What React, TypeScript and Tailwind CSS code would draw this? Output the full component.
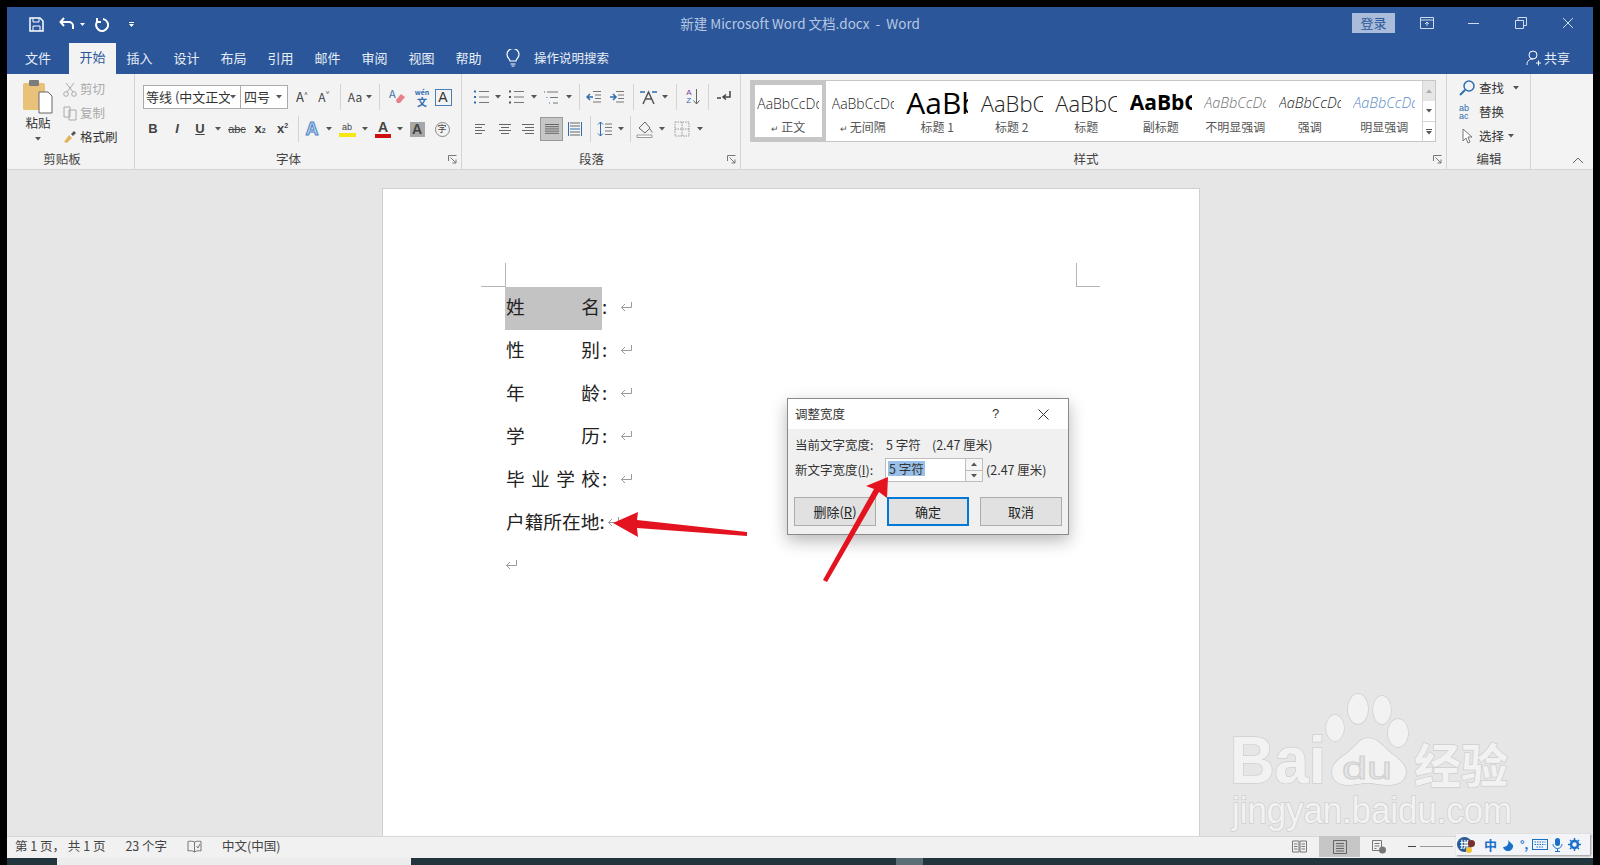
import { ReactNode } from "react";

const cjk = "font-['Noto_Sans_CJK_SC','Noto_Sans',sans-serif]";

const Caret = ({ className = "" }: { className?: string }) => (
  <svg width="6" height="4" viewBox="0 0 6 4" className={className}>
    <path d="M0 0h6L3 3.5z" fill="#555" />
  </svg>
);

const VDiv = ({ className = "" }: { className?: string }) => (
  <div className={`w-px h-[26px] bg-[#d4d4d4] shrink-0 ${className}`} />
);

const Launcher = () => (
  <svg width="9" height="9" viewBox="0 0 9 9" className="shrink-0">
    <path d="M.5 6V.5H8.5M2.5 2.5l5.5 5.5M8 4.5V8H4.5" fill="none" stroke="#777" />
  </svg>
);

const Cell = ({ className = "", children }: { className?: string; children?: ReactNode }) => (
  <div className={`flex items-center justify-center shrink-0 h-[24px] ${className}`}>{children}</div>
);

const GroupLabel = ({ text, className = "" }: { text: string; className?: string }) => (
  <div className={`flex items-center h-[20px] text-[12.5px] text-[#444] ${className}`}>
    <span className="flex-1 text-center">{text}</span>
  </div>
);

// paragraph alignment glyphs
const AlignIcon = ({ kind }: { kind: "left" | "center" | "right" | "justify" }) => {
  const rows: [number, number][] =
    kind === "left"
      ? [[1, 11], [1, 8], [1, 11], [1, 8]]
      : kind === "center"
      ? [[1, 13], [3, 11], [1, 13], [3, 11]]
      : kind === "right"
      ? [[1, 13], [4, 13], [1, 13], [4, 13]]
      : [[1, 15], [1, 15], [1, 15], [1, 15], [1, 15]];
  return (
    <svg width="16" height="14" viewBox="0 0 16 14">
      {rows.map(([a, b], i) => (
        <path key={i} d={`M${a} ${2.5 + i * (kind === "justify" ? 2.2 : 3)}H${b}`} stroke="#666" strokeWidth="1" />
      ))}
    </svg>
  );
};

const ReturnMark = ({ className = "" }: { className?: string }) => (
  <svg width="13" height="11" viewBox="0 0 13 11" className={className}>
    <path d="M11.5 1v5.5H1.5M5 3L1.5 6.5 5 10" fill="none" stroke="#9a9a9a" strokeWidth="1" />
  </svg>
);

const Clipboard = () => (
  <div className="w-[127px] shrink-0 flex flex-col">
    <div className="h-[75px] flex pl-[12px] pt-[6px]">
      <div className="w-[38px] flex flex-col items-center">
        <svg width="30" height="34" viewBox="0 0 30 34">
          <rect x="0" y="3" width="22" height="27" rx="1.5" fill="#e9c27a" />
          <rect x="6" y="0" width="10" height="6" rx="1" fill="#7c7c7c" />
          <path d="M16 12h9l4 4v17H16z" fill="#fff" stroke="#666" />
        </svg>
        <span className="text-[12.5px] text-[#333] leading-[16px] mt-[1px]">粘贴</span>
        <Caret className="mt-[6px]" />
      </div>
      <div className="flex flex-col ml-[6px] -mt-[2px] gap-[2px] text-[12.5px]">
        <div className="flex items-center h-[23px] gap-[3px] text-[#aaa]">
          <svg width="14" height="15" viewBox="0 0 14 15">
            <path d="M3 1l7 9M11 1l-7 9" stroke="#aaa" fill="none" />
            <circle cx="3" cy="12" r="2.3" stroke="#aaa" fill="none" />
            <circle cx="11" cy="12" r="2.3" stroke="#aaa" fill="none" />
          </svg>
          剪切
        </div>
        <div className="flex items-center h-[23px] gap-[3px] text-[#aaa]">
          <svg width="14" height="15" viewBox="0 0 14 15">
            <path d="M1 1h6v10H1zM6 4h7v10H6z" stroke="#aaa" fill="#f3f3f3" />
          </svg>
          复制
        </div>
        <div className="flex items-center h-[23px] gap-[3px] text-[#333]">
          <svg width="14" height="15" viewBox="0 0 14 15">
            <path d="M6 5l3 3-5 5-3-1z" fill="#e2b45c" />
            <path d="M8 4l3-3 2 2-3 3z" fill="#555" />
          </svg>
          格式刷
        </div>
      </div>
    </div>
    <GroupLabel text="剪贴板" className="pr-[17px]" />
  </div>
);

const FontGroup = () => (
  <div className="w-[327px] shrink-0 flex flex-col border-l border-[#d4d4d4] relative">
    <div className="h-[75px] flex flex-col pl-[8px] pt-[11px] text-[#444]">
      <div className="flex items-center h-[24px]">
        <div className="w-[98px] h-[24px] bg-white border border-[#ababab] flex items-center pl-[2px] pr-[4px] text-[13px] text-[#333]">
          <span className="flex-1 whitespace-nowrap overflow-hidden">等线 (中文正文</span>
          <Caret />
        </div>
        <div className="w-[47px] h-[24px] bg-white border border-l-0 border-[#ababab] flex items-center pl-[3px] pr-[5px] text-[13px] text-[#333]">
          <span className="flex-1">四号</span>
          <Caret />
        </div>
        <Cell className="w-[22px] ml-[3px] text-[13px]">A<sup className="text-[7px]">^</sup></Cell>
        <Cell className="w-[22px] text-[12px]">A<sup className="text-[7px]">ˇ</sup></Cell>
        <VDiv className="ml-[5px]" />
        <Cell className="w-[38px] gap-[4px] text-[12px]">Aa<Caret /></Cell>
        <VDiv />
        <Cell className="w-[33px]">
          <svg width="18" height="18" viewBox="0 0 18 18">
            <text x="1" y="10" fontSize="11" fill="#4472a8">A</text>
            <path d="M8 12l5-6 4 3-5 6H9z" fill="#e8808a" />
          </svg>
        </Cell>
        <Cell className="w-[18px] flex-col leading-[9px] text-[#2f6db0] font-bold">
          <span className="text-[7px]">wén</span>
          <span className="text-[10px]">文</span>
        </Cell>
        <Cell className="w-[24px]">
          <div className="w-[17px] h-[17px] border border-[#4a7fb5] flex items-center justify-center text-[14px] text-[#333] font-['Liberation_Sans',sans-serif]">A</div>
        </Cell>
      </div>
      <div className="flex items-center h-[24px] mt-[8px] -ml-[2px] font-['Liberation_Sans',sans-serif]">
        <Cell className="w-[24px] font-bold text-[13px]">B</Cell>
        <Cell className="w-[24px] italic font-bold text-[13px]">I</Cell>
        <Cell className="w-[22px] font-bold underline text-[13px]">U</Cell>
        <Cell className="w-[14px]"><Caret /></Cell>
        <Cell className="w-[24px] line-through text-[11px]">abc</Cell>
        <Cell className="w-[22px] font-bold text-[13px]">x<sub className="text-[7px]">2</sub></Cell>
        <Cell className="w-[23px] font-bold text-[13px]">x<sup className="text-[7px]">2</sup></Cell>
        <VDiv className="ml-[4px]" />
        <Cell className="w-[26px] font-bold text-[18px] text-[#bcd4ee] [-webkit-text-stroke:1px_#4a86c5]">A</Cell>
        <Cell className="w-[8px]"><Caret /></Cell>
        <Cell className="w-[26px] ml-[1px] flex-col leading-[10px]">
          <span className="text-[9px]">ab</span>
          <span className="w-[17px] h-[4px] bg-[#f6e714] mt-[1px]" />
        </Cell>
        <Cell className="w-[10px]"><Caret /></Cell>
        <Cell className="w-[26px] flex-col leading-[13px] text-[14px] font-bold">
          <span>A</span>
          <span className="w-[16px] h-[4px] bg-[#d01010]" />
        </Cell>
        <Cell className="w-[8px]"><Caret /></Cell>
        <Cell className="w-[26px]">
          <div className="w-[15px] h-[15px] bg-[#a8a8a8] flex items-center justify-center font-bold text-[14px]">A</div>
        </Cell>
        <Cell className="w-[24px]">
          <div className={`w-[15px] h-[15px] rounded-full border border-[#888] flex items-center justify-center text-[9px] ${cjk}`}>字</div>
        </Cell>
      </div>
    </div>
    <div className="flex items-center pr-[4px]">
      <GroupLabel text="字体" className="flex-1 pr-[6px]" />
      <Launcher />
    </div>
  </div>
);

const ListIcon = ({ numbered }: { numbered?: boolean }) => (
  <svg width="17" height="16" viewBox="0 0 17 16">
    {[2.5, 8, 13.5].map((y) => (
      <g key={y}>
        <rect x="1" y={y - 1} width="2" height="2" fill={numbered ? "#555" : "#2f6db0"} />
        <path d={`M6 ${y}H16`} stroke="#777" />
      </g>
    ))}
  </svg>
);

const ParagraphGroup = () => (
  <div className="w-[279px] shrink-0 flex flex-col border-l border-[#d4d4d4]">
    <div className="h-[75px] flex flex-col pl-[10px] pt-[11px]">
      <div className="flex items-center h-[24px]">
        <Cell className="w-[19px]"><ListIcon /></Cell>
        <Cell className="w-[14px]"><Caret /></Cell>
        <Cell className="w-[22px]"><ListIcon numbered /></Cell>
        <Cell className="w-[12px] ml-[1px]"><Caret /></Cell>
        <Cell className="w-[22px]">
          <svg width="16" height="15" viewBox="0 0 16 15">
            <path d="M4 2H15M7 7.500H15M10 13H15" stroke="#777" />
            <path d="M1 2h1M3.500 7.500h1M6 13h1" stroke="#2f6db0" />
          </svg>
        </Cell>
        <Cell className="w-[12px] ml-[1px]"><Caret /></Cell>
        <VDiv className="ml-[4px]" />
        <Cell className="w-[24px] ml-[2px]">
          <svg width="16" height="14" viewBox="0 0 16 14">
            <path d="M7 1.500h8M9 5h6M9 8.500h6M7 12h8" stroke="#777" />
            <path d="M1 7h6M4 4L1 7l3 3" stroke="#2f6db0" fill="none" strokeWidth="1.500" />
          </svg>
        </Cell>
        <Cell className="w-[22px]">
          <svg width="16" height="14" viewBox="0 0 16 14">
            <path d="M7 1.500h8M9 5h6M9 8.500h6M7 12h8" stroke="#777" />
            <path d="M1 7h6M4 4l3 3-3 3" stroke="#2f6db0" fill="none" strokeWidth="1.500" />
          </svg>
        </Cell>
        <VDiv className="ml-[5px]" />
        <Cell className="w-[24px] ml-[2px]">
          <svg width="19" height="16" viewBox="0 0 19 16">
            <path d="M1 3h5M13 3h5" stroke="#2f6db0" strokeWidth="1.500" />
            <path d="M4 15L9.500 3 15 15M6.500 10h6" stroke="#555" fill="none" strokeWidth="1.500" />
          </svg>
        </Cell>
        <Cell className="w-[10px]"><Caret /></Cell>
        <VDiv className="ml-[6px]" />
        <Cell className="w-[30px] ml-[1px] font-['Liberation_Sans',sans-serif] text-[8px] leading-[8px] gap-[1px]">
          <span className="flex flex-col text-[#7a3e9d]"><span>A</span><span className="text-[#2f6db0]">Z</span></span>
          <svg width="7" height="16" viewBox="0 0 7 16"><path d="M3.500 0v15M.5 11.500l3 3.500 3-3.500" stroke="#666" fill="none" /></svg>
        </Cell>
        <VDiv />
        <Cell className="w-[30px]">
          <svg width="16" height="12" viewBox="0 0 16 12">
            <path d="M14 0v6H7M10 3.500L7 6l3 2.500" stroke="#444" fill="none" strokeWidth="1.500" />
            <path d="M1 7h4" stroke="#444" strokeWidth="1.500" />
          </svg>
        </Cell>
      </div>
      <div className="flex items-center h-[24px] mt-[8px]">
        <Cell className="w-[20px]"><AlignIcon kind="left" /></Cell>
        <Cell className="w-[23px] ml-[2px]"><AlignIcon kind="center" /></Cell>
        <Cell className="w-[23px]"><AlignIcon kind="right" /></Cell>
        <Cell className="w-[23px] bg-[#c6c6c6] border border-[#9a9a9a]"><AlignIcon kind="justify" /></Cell>
        <Cell className="w-[24px]">
          <svg width="16" height="16" viewBox="0 0 16 16">
            <path d="M1.500 1v14M14.500 1v14" stroke="#2f6db0" />
            <path d="M3 2h10M3 5h10M3 11h10M3 14h10" stroke="#666" />
            <path d="M3 8h10" stroke="#2f6db0" />
          </svg>
        </Cell>
        <VDiv className="ml-[3px]" />
        <Cell className="w-[24px] ml-[2px]">
          <svg width="16" height="16" viewBox="0 0 16 16">
            <path d="M3.500 1v14M1 3.500L3.500 1 6 3.500M1 12.500L3.500 15 6 12.500" stroke="#2f6db0" fill="none" />
            <path d="M8 3h7M8 6.500h7M8 10h7M8 13.500h7" stroke="#777" />
          </svg>
        </Cell>
        <Cell className="w-[8px]"><Caret /></Cell>
        <VDiv className="ml-[5px]" />
        <Cell className="w-[24px] ml-[2px]">
          <svg width="18" height="18" viewBox="0 0 18 18">
            <path d="M3 8l6-6 5 6-5 5z" fill="#f3f3f3" stroke="#666" />
            <path d="M14 9c1 2 2 2 2 3.500" stroke="#666" fill="none" />
            <path d="M1 15h15v2.500H1z" fill="#fff" stroke="#999" />
          </svg>
        </Cell>
        <Cell className="w-[10px]"><Caret /></Cell>
        <Cell className="w-[24px] ml-[3px]">
          <svg width="16" height="16" viewBox="0 0 16 16">
            <path d="M1 1h14v14H1zM8 1v14M1 8h14" stroke="#999" strokeDasharray="1.500 1" fill="none" />
          </svg>
        </Cell>
        <Cell className="w-[12px]"><Caret /></Cell>
      </div>
    </div>
    <div className="flex items-center pr-[4px]">
      <GroupLabel text="段落" className="flex-1 pr-[6px]" />
      <Launcher />
    </div>
  </div>
);

const styles = [
  { sample: "AaBbCcDd", label: "正文", mark: true, cls: "text-[14px] font-light text-[#222]", sel: true },
  { sample: "AaBbCcDd", label: "无间隔", mark: true, cls: "text-[14px] font-light text-[#222]" },
  { sample: "AaBbC", label: "标题 1", cls: "text-[30px] font-medium text-black leading-[30px]" },
  { sample: "AaBbCc", label: "标题 2", cls: "text-[22px] font-light text-[#222]" },
  { sample: "AaBbCc", label: "标题", cls: "text-[22px] font-light text-[#222]" },
  { sample: "AaBbCc", label: "副标题", cls: "text-[21px] font-bold text-black" },
  { sample: "AaBbCcDd", label: "不明显强调", cls: "text-[14.5px] font-light italic text-[#707070]" },
  { sample: "AaBbCcDd", label: "强调", cls: "text-[14.5px] font-light italic text-[#222]" },
  { sample: "AaBbCcDd", label: "明显强调", cls: "text-[14.5px] font-light italic text-[#5b8ac8]" },
];

const StylesGroup = () => (
  <div className="w-[706px] shrink-0 flex flex-col border-l border-[#d4d4d4]">
    <div className="h-[75px] pl-[9px] pt-[6px]">
      <div className="flex w-[686px] h-[62px] bg-white border border-[#c6c6c6]">
        {styles.map((s) => (
          <div
            key={s.label}
            className={`w-[74.5px] h-[60px] shrink-0 flex flex-col items-center ${
              s.sel ? "border-[4px] border-[#c6c6c6] pt-[4px]" : "pt-[8px]"
            }`}
          >
            <div className={`w-[62px] h-[28px] shrink-0 overflow-hidden whitespace-nowrap flex items-center font-['Open_Sans',sans-serif] ${s.cls}`}>
              {s.sample}
            </div>
            <div className="mt-[2px] text-[12px] leading-[16px] text-[#555] whitespace-nowrap">
              {s.mark ? <span className="text-[9px] mr-[2px]">↵</span> : null}
              {s.label}
            </div>
          </div>
        ))}
        <div className="flex-1 flex flex-col border-l border-[#d4d4d4]">
          <div className="h-[20px] bg-[#e6e6e6] flex items-center justify-center"><Caret className="rotate-180 opacity-40" /></div>
          <div className="h-[21px] flex items-center justify-center border-b border-[#d4d4d4]"><Caret /></div>
          <div className="flex-1 flex flex-col items-center justify-center gap-[1px]">
            <div className="w-[6px] h-px bg-[#555]" />
            <Caret />
          </div>
        </div>
      </div>
    </div>
    <div className="flex items-center pr-[4px]">
      <GroupLabel text="样式" className="flex-1 pr-[2px]" />
      <Launcher />
    </div>
  </div>
);

const EditGroup = () => (
  <div className="w-[85px] shrink-0 flex flex-col border-l border-r border-[#d4d4d4]">
    <div className="h-[75px] flex flex-col pl-[12px] pt-[2px] text-[12.5px] text-[#333]">
      <div className="flex items-center h-[24px] gap-[4px]">
        <svg width="16" height="16" viewBox="0 0 16 16">
          <circle cx="10" cy="6" r="5" fill="none" stroke="#2f6db0" strokeWidth="1.500" />
          <path d="M6 10l-5 5" stroke="#2f6db0" strokeWidth="2" />
        </svg>
        查找
        <Caret className="ml-[5px]" />
      </div>
      <div className="flex items-center h-[24px] gap-[4px]">
        <div className="w-[16px] text-[9px] leading-[8px] font-['Liberation_Sans',sans-serif] text-[#2f6db0]">
          ab<br />ac
        </div>
        替换
      </div>
      <div className="flex items-center h-[24px] gap-[4px]">
        <svg width="16" height="17" viewBox="0 0 16 17">
          <path d="M4 1v12l3-3 2 5 2-1-2-5h4z" fill="#fff" stroke="#777" />
        </svg>
        选择
        <Caret />
      </div>
    </div>
    <GroupLabel text="编辑" className="pl-[1px]" />
  </div>
);

const tabs = ["插入", "设计", "布局", "引用", "邮件", "审阅", "视图", "帮助"];

const TitleBar = () => (
  <div className="bg-[#2b579a] shrink-0">
    <div className="h-[38px] flex items-center relative">
      <div className="flex items-center pl-[21px] -mt-[4px]">
        <Cell className="w-[16px]">
          <svg width="15" height="15" viewBox="0 0 15 15">
            <path d="M1 1h10l3 3v10H1z" fill="none" stroke="#fff" strokeWidth="1.500" />
            <path d="M4 1v4h6V1M4 14V9h7v5" fill="none" stroke="#fff" />
          </svg>
        </Cell>
        <Cell className="w-[20px] ml-[13px]">
          <svg width="16" height="14" viewBox="0 0 16 14">
            <path d="M5 1L1.500 5 5 9M2 5h8a4 4 0 0 1 4 4v3" fill="none" stroke="#fff" strokeWidth="2" />
          </svg>
        </Cell>
        <Cell className="w-[6px] ml-[2px]"><svg width="5" height="3" viewBox="0 0 5 3"><path d="M0 0h5L2.500 3z" fill="#fff" /></svg></Cell>
        <Cell className="w-[16px] ml-[8px]">
          <svg width="15" height="15" viewBox="0 0 15 15">
            <path d="M9 2a6 6 0 1 1-5 1.500M3 1v4h4" fill="none" stroke="#fff" strokeWidth="2" />
          </svg>
        </Cell>
        <Cell className="w-[8px] ml-[18px] flex-col gap-[1px]">
          <div className="w-[5px] h-px bg-white" />
          <svg width="5" height="3" viewBox="0 0 5 3"><path d="M0 0h5L2.500 3z" fill="#fff" /></svg>
        </Cell>
      </div>
      <div className="absolute left-0 right-0 top-0 h-[32px] flex items-center justify-center text-[13.5px] text-[#b8c8e2] pointer-events-none">
        新建 Microsoft Word 文档.docx&nbsp; - &nbsp;Word
      </div>
      <div className="ml-auto flex items-center text-[#cfdcee] pr-[2px]">
        <div className="w-[43px] h-[20px] bg-[#a9bcd9] text-[#2b579a] text-[13px] flex items-center justify-center -mt-[6px]">登录</div>
        <Cell className="w-[47px] ml-[8px] -mt-[6px]">
          <svg width="14" height="12" viewBox="0 0 14 12">
            <path d="M.5.5h13v11H.5zM1 3h12M7 9V5M5 7l2-2 2 2" fill="none" stroke="#cfdcee" />
          </svg>
        </Cell>
        <Cell className="w-[47px] -mt-[6px]">
          <div className="w-[11px] h-px bg-[#cfdcee]" />
        </Cell>
        <Cell className="w-[47px] -mt-[6px]">
          <svg width="12" height="12" viewBox="0 0 12 12">
            <path d="M.5 3.500h8v8h-8zM3 3.500V.5h8.500v8H8.500" fill="none" stroke="#cfdcee" />
          </svg>
        </Cell>
        <Cell className="w-[47px] -mt-[6px]">
          <svg width="12" height="12" viewBox="0 0 12 12"><path d="M1 1l10 10M11 1L1 11" stroke="#cfdcee" /></svg>
        </Cell>
      </div>
    </div>
    <div className="h-[29px] flex items-end text-[13px] text-[#e8eef7]">
      <div className="w-[62px] h-[28px] pb-[4px] flex items-center justify-center">文件</div>
      <div className="w-[47px] h-[31px] -mt-[2px] pb-[4px] bg-[#f3f3f3] text-[#2b579a] flex items-center justify-center">开始</div>
      {tabs.map((t) => (
        <div key={t} className="w-[47px] h-[28px] pb-[4px] flex items-center justify-center">{t}</div>
      ))}
      <div className="h-[28px] pb-[4px] flex items-center ml-[14px] gap-[14px]">
        <svg width="14" height="18" viewBox="0 0 14 18">
          <path d="M4 12c0-2-3-3-3-6.500a6 6 0 0 1 12 0C13 9 10 10 10 12zM4.500 15h5M5.500 17h3" fill="none" stroke="#fff" strokeWidth="1.200" />
        </svg>
        <span className="text-[12.5px]">操作说明搜索</span>
      </div>
      <div className="ml-auto h-[28px] pb-[4px] flex items-center gap-[3px] pr-[23px]">
        <svg width="15" height="16" viewBox="0 0 15 16">
          <circle cx="7" cy="5" r="4" fill="none" stroke="#fff" />
          <path d="M1 15c0-4 2-6 6-6M10 13h5M12.500 10.500v5" fill="none" stroke="#fff" />
        </svg>
        共享
      </div>
    </div>
  </div>
);

const Ribbon = () => (
  <div className="h-[96px] shrink-0 bg-[#f3f3f3] border-b border-[#d4d4d4] flex relative">
    <Clipboard />
    <FontGroup />
    <ParagraphGroup />
    <StylesGroup />
    <EditGroup />
    <div className="flex-1 flex items-end justify-end pr-[9px] pb-[5px]">
      <svg width="12" height="7" viewBox="0 0 12 7"><path d="M1 6l5-5 5 5" fill="none" stroke="#666" /></svg>
    </div>
  </div>
);

const lines = [
  { chars: ["姓", "名"], selected: true },
  { chars: ["性", "别"] },
  { chars: ["年", "龄"] },
  { chars: ["学", "历"] },
  { chars: ["毕", "业", "学", "校"] },
];

const DocLine = ({ chars, selected }: { chars: string[]; selected?: boolean }) => (
  <div className="h-[43px] flex items-center">
    <div className={`w-[97px] h-[43px] pr-[2px] pl-[1px] pb-[4px] flex items-center justify-between ${selected ? "bg-[#c3c3c3]" : ""}`}>
      {chars.map((c) => (
        <span key={c}>{c}</span>
      ))}
    </div>
    <span className="w-[18px] pb-[4px]">:</span>
    <ReturnMark className="-mt-[4px]" />
  </div>
);

const Page = () => (
  <div className={`ml-[375px] w-[818px] h-full bg-white border-x border-t border-[#d0d0d0] relative pt-[98px] pl-[122px] text-[18.7px] text-[#222] ${cjk}`}>
    <div className="absolute left-[122px] top-[74px] w-px h-[24px] bg-[#b5b5b5]" />
    <div className="absolute left-[98px] top-[97px] w-[24px] h-px bg-[#b5b5b5]" />
    <div className="absolute left-[693px] top-[74px] w-px h-[24px] bg-[#b5b5b5]" />
    <div className="absolute left-[693px] top-[97px] w-[24px] h-px bg-[#b5b5b5]" />
    {lines.map((l) => (
      <DocLine key={l.chars[0]} chars={l.chars} selected={l.selected} />
    ))}
    <div className="h-[43px] pb-[4px] flex items-center">
      <span className="pl-[1px] whitespace-nowrap">户籍所在地:</span>
      <ReturnMark className="ml-[2px]" />
    </div>
    <div className="h-[43px] pb-[4px] flex items-center">
      <ReturnMark />
    </div>
  </div>
);

const DlgButton = ({ text, primary }: { text: ReactNode; primary?: boolean }) => (
  <div
    className={`w-[82px] h-[29px] flex items-center justify-center text-[13px] text-[#222] bg-[#e1e1e1] ${
      primary ? "border-2 border-[#0078d7]" : "border border-[#adadad]"
    }`}
  >
    {text}
  </div>
);

const Dialog = () => (
  <div className={`absolute left-[787px] top-[398px] w-[282px] h-[137px] bg-[#f0f0f0] border border-[#8a8a8a] shadow-[0_6px_16px_rgba(0,0,0,0.28)] text-[12.5px] text-[#333] flex flex-col ${cjk}`}>
    <div className="h-[30px] bg-white flex items-center pl-[7px] shrink-0">
      <span className="w-[50px]">调整宽度</span>
      <span className="ml-[147px] text-[13px] font-['Liberation_Sans',sans-serif]">?</span>
      <svg width="11" height="11" viewBox="0 0 11 11" className="ml-[39px]">
        <path d="M.5.5l10 10M10.500.5l-10 10" stroke="#333" />
      </svg>
    </div>
    <div className="flex items-center pl-[7px] h-[17px] mt-[8px]">
      <span className="w-[91px] whitespace-nowrap">当前文字宽度:</span>
      <span className="whitespace-pre">5 字符    (2.47 厘米)</span>
    </div>
    <div className="flex items-center pl-[7px] mt-[4px] h-[24px]">
      <span className="w-[90px] whitespace-nowrap">新文字宽度(<u>I</u>):</span>
      <div className="w-[98px] h-[24px] bg-white border border-[#bdbdbd] flex items-center pl-[2px] relative">
        <span className="bg-[#99c0e8] px-[1px] leading-[15px] mb-[3px]">5 字符</span>
        <div className="absolute right-0 top-0 bottom-0 w-[17px] border-l border-[#bdbdbd] flex flex-col">
          <div className="flex-1 flex items-center justify-center bg-[#f5f5f5] border-b border-[#bdbdbd]"><Caret className="rotate-180" /></div>
          <div className="flex-1 flex items-center justify-center bg-[#f5f5f5]"><Caret /></div>
        </div>
      </div>
      <span className="ml-[3px] whitespace-nowrap">(2.47 厘米)</span>
    </div>
    <div className="flex pl-[6px] gap-[11px] mt-[15px]">
      <DlgButton text={<>删除(<u>R</u>)</>} />
      <DlgButton text="确定" primary />
      <DlgButton text="取消" />
    </div>
  </div>
);

const Arrows = () => (
  <svg className="absolute left-0 top-0 pointer-events-none" width="1600" height="865" viewBox="0 0 1600 865">
    <path d="M613 523L638 512 637 520 747 532 747 536 637 528 638 537z" fill="#e3141f" />
    <path d="M888 477L887 498 879 492 827 582 823 580 874 489 866 486z" fill="#e3141f" />
  </svg>
);

const Watermark = () => (
  <svg className="absolute left-[1220px] top-[690px] pointer-events-none" width="300" height="145" viewBox="1220 690 300 145">
    <g fill="#f2f2f2" stroke="#cfcfcf" strokeWidth="1.500" paintOrder="stroke">
      <ellipse cx="1358" cy="709" rx="10" ry="15" />
      <ellipse cx="1382" cy="710" rx="9" ry="14" />
      <ellipse cx="1335" cy="728" rx="9" ry="13" />
      <ellipse cx="1398" cy="733" rx="10" ry="14" />
      <path d="M1368 738c10 0 15 9 24 16 9 6 14 12 14 18 0 9-8 13-18 13-8 0-13-2-20-2-8 0-13 2-20 2-10 0-16-5-16-13 0-7 6-13 14-18 9-6 13-16 22-16z" />
      <text x="1230" y="783" fontSize="66" fontWeight="700" textLength="96" lengthAdjust="spacingAndGlyphs" fontFamily="Liberation Sans, sans-serif">Bai</text>
      <text x="1414" y="783" fontSize="47" fontWeight="700" textLength="94" fontFamily="Noto Sans CJK SC, sans-serif">经验</text>
      <text x="1232" y="823" fontSize="37" textLength="280" lengthAdjust="spacingAndGlyphs" fontFamily="Liberation Sans, sans-serif">jingyan.baidu.com</text>
    </g>
    <text x="1342" y="779" fontSize="32" fill="#e6e6e6" stroke="#cfcfcf" textLength="50" lengthAdjust="spacingAndGlyphs" fontFamily="Liberation Sans, sans-serif">du</text>
  </svg>
);

const ImeBar = () => (
  <div className={`absolute left-[1456px] top-[834px] w-[134px] h-[21px] bg-[#f2f4f8] shadow-[1px_1px_2px_rgba(0,0,0,0.4)] flex items-center pl-[1px] text-[#1a6fc9] ${cjk}`}>
    <div className="w-[15px] h-[15px] rounded-full bg-[#2a5a8f] text-white text-[9px] flex items-center justify-center shrink-0 relative font-bold">
      拼
      <div className="absolute -right-[3px] top-[3px] w-[7px] h-[7px] rounded-full bg-[#7a2f2a]" />
      <div className="absolute -bottom-[1px] right-0 w-[6px] h-[6px] rounded-full bg-[#f2c230]" />
    </div>
    <span className="ml-[12px] text-[13px] font-bold leading-none">中</span>
    <svg width="12" height="12" viewBox="0 0 12 12" className="ml-[5px]"><path d="M6 1a5 5 0 0 1-5 7 5 5 0 0 0 10-2" fill="#1a6fc9" /></svg>
    <span className="ml-[6px] text-[11px] font-bold leading-none">°,</span>
    <svg width="16" height="11" viewBox="0 0 16 11" className="ml-[4px]">
      <rect x=".5" y=".5" width="15" height="10" fill="none" stroke="#1a6fc9" />
      <path d="M2.500 3h11M2.500 5.500h11M4.500 8h7" stroke="#1a6fc9" strokeDasharray="1.500 1" />
    </svg>
    <svg width="11" height="14" viewBox="0 0 11 14" className="ml-[4px]">
      <rect x="3" y="0" width="5" height="8" rx="2.500" fill="#1a6fc9" />
      <path d="M1 6a4.500 4.500 0 0 0 9 0M5.500 11v2.500M3 13.500h5" fill="none" stroke="#1a6fc9" />
    </svg>
    <svg width="13" height="13" viewBox="0 0 13 13" className="ml-[5px]">
      <circle cx="6.500" cy="6.500" r="3.500" fill="none" stroke="#1a6fc9" strokeWidth="2.500" />
      <path d="M6.500 0v2.500M6.500 10.500V13M0 6.500h2.500M10.500 6.500H13M2 2l1.500 1.500M9.500 9.500L11 11M11 2L9.500 3.500M3.500 9.500L2 11" stroke="#1a6fc9" strokeWidth="1.500" />
    </svg>
  </div>
);

const StatusBar = () => (
  <div className="h-[22px] shrink-0 bg-[#f1f1f1] border-t border-[#d8d8d8] flex items-center pb-[2px] text-[12.5px] text-[#444]">
    <span className="ml-[8px] whitespace-pre">第 1 页， 共 1 页</span>
    <span className="ml-[20px] whitespace-nowrap">23 个字</span>
    <svg width="15" height="13" viewBox="0 0 15 13" className="ml-[20px]">
      <path d="M7.500 2v10M7.500 2C5.500 1 3 1 1 1.500v9.500c2-.5 4.500-.5 6.500 1 2-1.500 4.500-1.500 6.500-1V1.500C12 1 9.500 1 7.500 2zM9.500 6l1.500 2 2-4" fill="none" stroke="#777" />
    </svg>
    <span className="ml-[20px] whitespace-nowrap">中文(中国)</span>
    <div className="ml-auto flex items-center h-full pr-[140px]">
      <Cell className="w-[40px]">
        <svg width="15" height="13" viewBox="0 0 15 13">
          <path d="M.5 1h6.500v11H.5zM8 1h6.500v11H8zM2 4h3.500M2 6.500h3.500M2 9h3.500M9.500 4H13M9.500 6.500H13M9.500 9H13" fill="none" stroke="#777" />
        </svg>
      </Cell>
      <div className="w-[41px] h-[21px] bg-[#c6c6c6] flex items-center justify-center">
        <svg width="14" height="14" viewBox="0 0 14 14">
          <path d="M.5.5h13v13H.5zM3 3.500h8M3 6h8M3 8.500h8M3 11h8" fill="none" stroke="#666" />
        </svg>
      </div>
      <Cell className="w-[38px]">
        <svg width="15" height="14" viewBox="0 0 15 14">
          <path d="M.5.5h9v10h-9zM2.500 3.500h5M2.500 6h5M2.500 8.500h2" fill="none" stroke="#777" />
          <circle cx="10.500" cy="10" r="3.500" fill="#777" />
        </svg>
      </Cell>
      <div className="w-[8px] h-px bg-[#444] ml-[10px]" />
      <div className="w-[33px] h-px bg-[#999] ml-[4px]" />
    </div>
  </div>
);

export default function App() {
  return (
    <div className={`relative w-[1600px] h-[865px] bg-black overflow-hidden px-[7px] pt-[7px] flex flex-col ${cjk}`}>
      <TitleBar />
      <Ribbon />
      <div className="flex-1 min-h-0 bg-[#e6e6e6] flex pt-[18px] overflow-hidden">
        <Page />
      </div>
      <StatusBar />
      <div className="h-[7px] shrink-0 bg-[#22353f] flex">
        <div className="w-[50px]" />
        <div className="w-[354px] bg-[#ececec]" />
        <div className="w-[485px]" />
        <div className="w-[27px] bg-[#5b6d75]" />
      </div>
      <Watermark />
      <Dialog />
      <Arrows />
      <ImeBar />
    </div>
  );
}
